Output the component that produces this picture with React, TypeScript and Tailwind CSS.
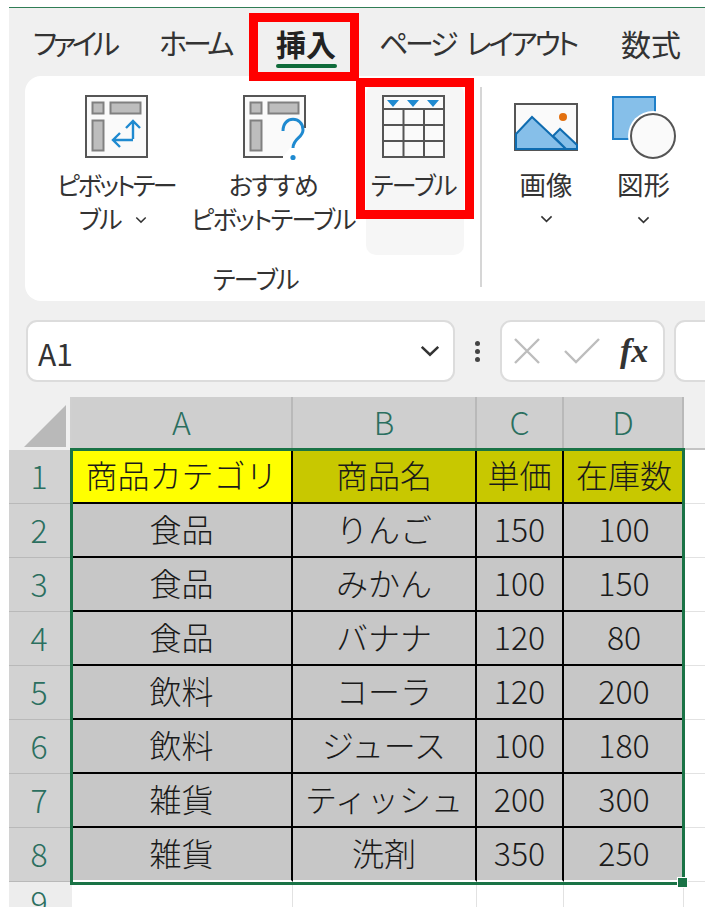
const font = "[font-family:'Noto_Sans_CJK_JP','Noto_Sans',sans-serif]";

const rows: string[][] = [
  ["食品", "りんご", "150", "100"],
  ["食品", "みかん", "100", "150"],
  ["食品", "バナナ", "120", "80"],
  ["飲料", "コーラ", "120", "200"],
  ["飲料", "ジュース", "100", "180"],
  ["雑貨", "ティッシュ", "200", "300"],
  ["雑貨", "洗剤", "350", "250"],
];

function Chevron({ className = "" }: { className?: string }) {
  return (
    <svg viewBox="0 0 14 8" className={className} fill="none" stroke="#333" strokeWidth="1.7">
      <path d="M1.5 1.2 7 6.5l5.5-5.3" />
    </svg>
  );
}

function PivotBase({ cut }: { cut?: boolean }) {
  return (
    <>
      <path d={cut ? "M40 62H1V1h61v32" : "M1 1h61v61H1z"} fill="#fafafa" stroke="#555" strokeWidth="2" />
      <rect x="7.5" y="7.5" width="11" height="11" fill="#bdbdbd" stroke="#808080" strokeWidth="2" />
      <rect x="25.5" y="7.5" width="30" height="11" fill="#bdbdbd" stroke="#808080" strokeWidth="2" />
      <rect x="7.5" y="25.5" width="11" height="30" fill="#bdbdbd" stroke="#808080" strokeWidth="2" />
    </>
  );
}

function PivotIcon() {
  return (
    <svg viewBox="0 0 63 63" className="w-[63px] h-[63px]">
      <PivotBase />
      <path d="M48 44V27M41 33l7-7 7 7M48 45H29M35 38l-7 7 7 7" fill="none" stroke="#1f8ad0" strokeWidth="2.4" />
    </svg>
  );
}

function RecommendIcon() {
  return (
    <svg viewBox="0 0 70 66" className="w-[70px] h-[66px] ml-[10px]">
      <PivotBase cut />
      <path d="M46 42c0-16 20-15 20-1 0 8-10 8-10 18" transform="translate(-6 -6)" fill="none" stroke="#1f8ad0" strokeWidth="3" />
      <circle cx="50" cy="62.5" r="2.6" fill="#1f8ad0" />
    </svg>
  );
}

function TableIcon() {
  return (
    <svg viewBox="0 0 63 63" className="w-[63px] h-[63px]">
      <rect x="1" y="1" width="61" height="61" fill="#fafafa" stroke="#555" strokeWidth="2" />
      <path d="M1 14h61M1 30h61M1 46h61M21.5 14v48M42 14v48" stroke="#555" strokeWidth="2" fill="none" />
      <path d="M5 5h12l-6 7zM25 5h12l-6 7zM45 5h12l-6 7z" fill="#1f8ad0" />
    </svg>
  );
}

function PictureIcon() {
  return (
    <svg viewBox="0 0 64 48" className="w-[64px] h-[48px]">
      <rect x="1" y="1" width="62" height="46" fill="#fafafa" stroke="#555" strokeWidth="2" />
      <path d="M2 31 18 14l34 32H2z" fill="#86bfe9" stroke="#0f6cb0" strokeWidth="2" />
      <path d="M39 33l7-7 17 16v4H52z" fill="#86bfe9" stroke="#0f6cb0" strokeWidth="2" />
      <circle cx="49" cy="14" r="4" fill="#e3700f" />
    </svg>
  );
}

function ShapeIcon() {
  return (
    <svg viewBox="0 0 64 64" className="w-[64px] h-[64px]">
      <rect x="1" y="1" width="42" height="42" fill="#86bfe9" stroke="#1f7fc8" strokeWidth="2" />
      <circle cx="41" cy="40" r="25" fill="#fff" />
      <circle cx="41" cy="40" r="22" fill="#fafafa" stroke="#555" strokeWidth="2" />
    </svg>
  );
}

function CornerTriangle() {
  return (
    <svg viewBox="0 0 42 42" className="w-[42px] h-[42px]">
      <path d="M42 0v42H0z" fill="#b9b9b9" />
    </svg>
  );
}

const Label = ({ children }: { children: React.ReactNode }) => (
  <span className="text-[25px] leading-[34px] text-[#333] whitespace-nowrap [font-feature-settings:'palt'] tracking-[-1.4px]">
    {children}
  </span>
);

function RowHeader({ n }: { n: number }) {
  return (
    <div className="bg-[#d2d2d2] border-b border-[#b9b9b9] flex items-center justify-center text-[32px] font-light text-[#2b6f5f] pr-[3px] pb-[4px]">
      {n}
    </div>
  );
}

function ColHeader({ c }: { c: string }) {
  return (
    <div className="bg-[#cfcfcf] border-r-2 border-[#b9b9b9] flex items-center justify-center text-[32px] font-light text-[#2b6f5f] pb-[6px]">
      {c}
    </div>
  );
}

function Cell({ children, bg = "bg-[#c7c7c7]", last, bottom }: { children: React.ReactNode; bg?: string; last?: boolean; bottom?: boolean }) {
  return (
    <div
      className={`${bg} ${last ? "" : "border-r-2"} border-b-2 border-black ${bottom ? "border-b-white" : ""} flex items-center justify-center text-[32px] font-light text-[#1a1a1a] whitespace-nowrap pb-[4px]`}
    >
      {children}
    </div>
  );
}

export default function App() {
  return (
    <div className={`${font} relative w-[705px] h-[907px] overflow-hidden bg-white pl-[9px] pt-[7px]`}>
      <div className="h-[900px] bg-[#f0f0f0] border-t border-[#2f7d55] flex flex-col">
        {/* tabs */}
        <div className="h-[68px] shrink-0 flex items-center pl-[24px] pt-[2px] text-[#333] text-[29px] [font-feature-settings:'palt'] whitespace-nowrap">
          <span className="w-[126px] tracking-[-4.5px]">ファイル</span>
          <span className="w-[117px] tracking-[-3.8px]">ホーム</span>
          <span className="w-[103px] relative text-[30px] font-bold text-[#222]">
            挿入
            <span className="absolute left-0 top-[43px] w-[61px] h-[4px] rounded-full bg-[#0f6b3a]" />
          </span>
          <span className="w-[242px] tracking-[-3.3px] [word-spacing:8px]">ページ レイアウト</span>
          <span className="text-[30px]">数式</span>
        </div>

        {/* ribbon */}
        <div className="ml-[16px] h-[225px] shrink-0 bg-white rounded-l-[16px] flex">
          <div className="w-[457px] flex flex-col border-r-2 border-[#d6d6d6] mt-[11px] mb-[14px] pl-[25px]">
            <div className="flex h-[180px] -mt-[3px]">
              <div className="w-[134px] flex flex-col items-center pt-[11px] pr-[2px]">
                <PivotIcon />
                <div className="mt-[9px] flex flex-col items-center">
                  <span className="text-[25px] leading-[34px] text-[#333] whitespace-nowrap [font-feature-settings:'palt'] tracking-[-2.6px]">ピボットテー</span>
                  <div className="pr-[6px]">
                    <Label>
                      ブル <Chevron className="inline-block w-[12px] h-[8px] ml-[10px] mb-[5px]" />
                    </Label>
                  </div>
                </div>
              </div>
              <div className="ml-[4px] w-[170px] flex flex-col items-center pt-[11px]">
                <RecommendIcon />
                <div className="mt-[6px] flex flex-col items-center">
                  <Label>おすすめ</Label>
                  <span className="text-[25px] leading-[34px] text-[#333] whitespace-nowrap [font-feature-settings:'palt'] tracking-[-1.7px]">ピボットテーブル</span>
                </div>
              </div>
              <div className="ml-[8px] w-[98px] h-[171px] bg-[#f6f6f6] rounded-[10px] flex flex-col items-center pt-[11px] pr-[3px]">
                <TableIcon />
                <div className="mt-[9px]">
                  <Label>テーブル</Label>
                </div>
              </div>
            </div>
            <div className="-ml-[19px] mt-[6px] text-center">
              <Label>テーブル</Label>
            </div>
          </div>
          <div className="flex pl-[24px] pt-[9px]">
            <div className="w-[80px] flex flex-col items-center pt-[18px]">
              <PictureIcon />
              <div className="mt-[16px] text-[26.5px] leading-[34px] text-[#333]">画像</div>
              <Chevron className="w-[13px] h-[8px] mt-[14px]" />
            </div>
            <div className="ml-[17px] w-[80px] flex flex-col items-center pt-[11px] pl-[1px]">
              <ShapeIcon />
              <div className="mt-[7px] text-[26.5px] leading-[34px] text-[#333]">図形</div>
              <Chevron className="w-[13px] h-[8px] mt-[15px]" />
            </div>
          </div>
        </div>

        {/* formula bar */}
        <div className="h-[96px] flex items-start pt-[19px] pl-[17px] shrink-0">
          <div className="w-[429px] h-[62px] bg-white border-2 border-[#dcdcdc] rounded-[11px] flex items-center justify-between pl-[10px] pr-[12px] text-[30px] text-[#333]">
            <span className="pt-[5px]">A1</span>
            <Chevron className="w-[22px] h-[12px]" />
          </div>
          <div className="w-[45px] h-[62px] flex flex-col items-center justify-center gap-[3px]">
            <span className="w-[5px] h-[5px] rounded-full bg-[#444]" />
            <span className="w-[5px] h-[5px] rounded-full bg-[#444]" />
            <span className="w-[5px] h-[5px] rounded-full bg-[#444]" />
          </div>
          <div className="w-[165px] h-[62px] bg-white border-2 border-[#dcdcdc] rounded-[11px] flex items-center pl-[11px]">
            <svg viewBox="0 0 28 28" className="w-[28px] h-[28px]" stroke="#bdbdbd" strokeWidth="2.4" fill="none">
              <path d="M2 2l24 24M26 2 2 26" />
            </svg>
            <svg viewBox="0 0 36 28" className="w-[36px] h-[28px] ml-[23px]" stroke="#bdbdbd" strokeWidth="2.4" fill="none">
              <path d="M1 14l11 11L35 2" />
            </svg>
            <span className="ml-[20px] font-['Liberation_Serif'] italic font-bold text-[34px] leading-none text-[#333]">fx</span>
          </div>
          <div className="ml-[9px] flex-1 h-[62px] bg-white border-2 border-r-0 border-[#dcdcdc] rounded-l-[11px]" />
        </div>

        {/* sheet */}
        <div className="relative flex-1 grid grid-cols-[63px_221px_184px_87px_120px_21px] grid-rows-[53px_repeat(8,54px)_25px] bg-white">
          <div className="flex items-end justify-end pr-[4px] pb-[3px] border-r-2 border-[#d0d0d0] bg-[#f0f0f0]">
            <CornerTriangle />
          </div>
          <ColHeader c="A" />
          <ColHeader c="B" />
          <ColHeader c="C" />
          <ColHeader c="D" />
          <div className="bg-[#f0f0f0] border-b-2 border-[#c4c4c4]" />

          <RowHeader n={1} />
          <Cell bg="bg-[#ffff00]">商品カテゴリ</Cell>
          <Cell bg="bg-[#c8c800]">商品名</Cell>
          <Cell bg="bg-[#c8c800]">単価</Cell>
          <Cell bg="bg-[#c8c800]" last>在庫数</Cell>
          <div className="border-b border-[#e2e2e2]" />

          {rows.map((row, i) => (
            <div key={i} className="contents">
              <RowHeader n={i + 2} />
              {row.map((v, j) => (
                <Cell key={j} last={j === 3} bottom={i === rows.length - 1}>{v}</Cell>
              ))}
              <div className="border-b border-[#e2e2e2]" />
            </div>
          ))}

          <div className="bg-[#ededed] flex justify-center text-[32px] font-light leading-none text-[#2b6f5f] pt-[3px] pr-[3px]">9</div>
          <div className="border-r border-[#e2e2e2]" />
          <div className="border-r border-[#e2e2e2]" />
          <div className="border-r border-[#e2e2e2]" />
          <div className="border-r border-[#e2e2e2]" />
          <div />

          {/* selection outline */}
          <div className="absolute left-[61px] top-[51px] w-[615px] h-[437px] border-[3px] border-[#1a7346] pointer-events-none" />
          <div className="absolute left-[668px] top-[480px] w-[11px] h-[11px] bg-[#1a7346] border border-white pointer-events-none" />
        </div>
      </div>

      {/* red annotations */}
      <div className="absolute left-[249px] top-[13px] w-[110px] h-[68px] border-[9px] border-[#ff0000] pointer-events-none" />
      <div className="absolute left-[356px] top-[78px] w-[118px] h-[141px] border-[9px] border-[#ff0000] pointer-events-none" />
    </div>
  );
}
